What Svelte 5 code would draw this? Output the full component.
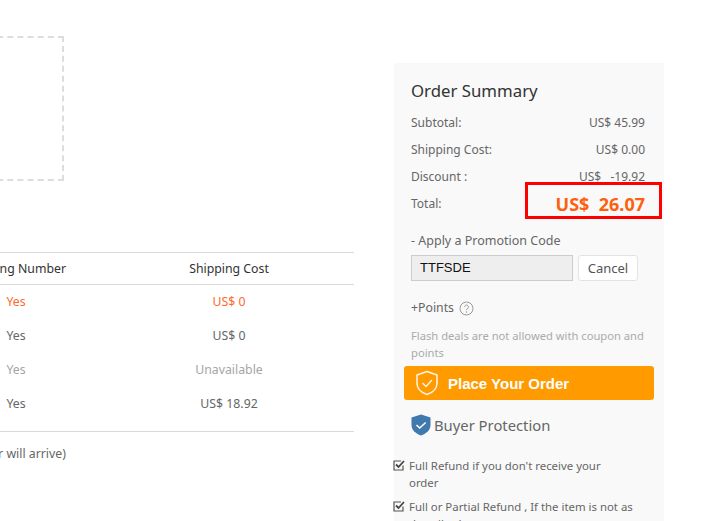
<script>
  const rows = [
    { yes: 'Yes', cost: 'US$ 0', tone: 'hot' },
    { yes: 'Yes', cost: 'US$ 0', tone: '' },
    { yes: 'Yes', cost: 'Unavailable', tone: 'off' },
    { yes: 'Yes', cost: 'US$ 18.92', tone: '' }
  ];
  const totals = [
    ['Subtotal:', 'US$ 45.99'],
    ['Shipping Cost:', 'US$ 0.00'],
    ['Discount :', 'US$   -19.92']
  ];
  const refunds = [
    "Full Refund if you don't receive your\norder",
    'Full or Partial Refund , If the item is not as described'
  ];
</script>

<div class="page">
  <section class="left">
    <div class="dash"></div>
    <div class="table">
      <div class="row head">
        <span class="c1">Tracking Number</span>
        <span class="c2">Shipping Cost</span>
      </div>
      <div class="body">
        {#each rows as r}
          <div class="row {r.tone}">
            <span class="c1">{r.yes}</span>
            <span class="c2">{r.cost}</span>
          </div>
        {/each}
      </div>
    </div>
    <p class="note">(Your order will arrive)</p>
  </section>

  <aside class="side">
    <h2>Order Summary</h2>
    {#each totals as t}
      <div class="line"><span>{t[0]}</span><span class="val">{t[1]}</span></div>
    {/each}
    <div class="line total">
      <span>Total:</span>
      <strong class="val">US$&nbsp; 26.07</strong>
      <i class="mark"></i>
    </div>

    <div class="promo-title">- Apply a Promotion Code</div>
    <div class="promo">
      <div class="code">TTFSDE</div>
      <button class="cancel">Cancel</button>
    </div>

    <div class="points">
      +Points
      <svg width="15" height="15" viewBox="0 0 15 15">
        <circle cx="7.5" cy="7.5" r="6.5" fill="none" stroke="#999" stroke-width="1" />
        <path d="M5.6 5.9a1.9 1.9 0 1 1 3 1.6c-.7.5-1.1.8-1.1 1.7" fill="none" stroke="#999" stroke-width="1" />
        <circle cx="7.5" cy="11" r=".7" fill="#999" />
      </svg>
    </div>
    <p class="flash">Flash deals are not allowed with coupon and points</p>

    <button class="order">
      <svg width="24" height="26" viewBox="0 0 24 26">
        <path d="M12 1.5 22 5v8c0 5.500-4 9.500-10 11.500C6 22.500 2 18.500 2 13V5z" fill="none" stroke="#fff" stroke-width="1.500" stroke-linejoin="round" opacity=".9" />
        <path d="M7.500 13l3.500 3.500 6-6.500" fill="none" stroke="#fff" stroke-width="1.300" opacity=".9" />
      </svg>
      <span>Place Your Order</span>
    </button>

    <div class="protect">
      <svg width="20" height="22" viewBox="0 0 20 22">
        <path d="M10 .5 19.500 3.500V11c0 5-4 8.500-9.500 10.500C4.500 19.500.5 16 .5 11V3.500z" fill="#3f79ad" />
        <path d="M5.500 11l3.200 3 6-5.500" fill="none" stroke="#fff" stroke-width="1.600" />
      </svg>
      <span>Buyer Protection</span>
    </div>

    <ul class="refunds">
      {#each refunds as text}
        <li>
          <svg width="12" height="12" viewBox="0 0 12 12">
            <path d="M10 6.500V11H1V2h7" fill="none" stroke="#555" stroke-width="1.200" />
            <path d="M3 5.500l2.500 2.500L11 2" fill="none" stroke="#444" stroke-width="1.800" />
          </svg>
          <span>{text}</span>
        </li>
      {/each}
    </ul>
  </aside>
</div>

<style>
  :global(body) {
    margin: 0;
    background: #fff;
    overflow: hidden;
  }
  .page {
    display: flex;
    height: 521px;
    overflow: hidden;
    font-family: "Noto Sans", "Open Sans", sans-serif;
    font-size: 12px;
    color: #666;
  }
  .left {
    flex: none;
    box-sizing: border-box;
    width: 438px;
    margin-left: -84px;
    margin-right: 40px;
    padding-top: 36px;
    font-size: 12.3px;
  }
  .dash {
    box-sizing: border-box;
    width: 148px;
    height: 145px;
    border: 2px dashed #ddd;
  }
  .table {
    margin-top: 71px;
    border-top: 1px solid #d9d9d9;
    border-bottom: 1px solid #d9d9d9;
  }
  .row {
    display: flex;
    height: 34px;
    align-items: center;
  }
  .head {
    height: 31px;
    color: #333;
    border-bottom: 1px solid #d9d9d9;
  }
  .body {
    margin-top: -1px;
    padding-bottom: 11px;
  }
  .c1 {
    width: 200px;
    text-align: center;
  }
  .c2 {
    flex: 1;
    text-align: center;
    margin-right: 12px;
  }
  .hot { color: #ff6a2b; }
  .off { color: #a5a5a5; }
  .note {
    margin: 13px 0 0;
    padding-left: 22px;
  }
  .side {
    flex: none;
    box-sizing: border-box;
    width: 270px;
    height: 560px;
    margin-top: 63px;
    padding: 14px 19px 0 17px;
    background: #f9f9f9;
  }
  h2 {
    margin: 0 0 4px;
    font-size: 16.8px;
    font-weight: 400;
    line-height: 28px;
    color: #333;
  }
  .line {
    display: flex;
    position: relative;
    justify-content: space-between;
    align-items: center;
    height: 27px;
    white-space: pre;
  }
  .total strong {
    font-size: 18px;
    font-weight: 700;
    color: #ff5f0f;
  }
  .mark {
    position: absolute;
    left: 114px;
    right: -17px;
    top: -8px;
    bottom: -2px;
    border: 3px solid #f00;
  }
  .promo-title {
    margin-top: 14px;
    font-size: 12.5px;
    line-height: 20px;
  }
  .promo {
    display: flex;
    gap: 5px;
    margin-top: 4px;
  }
  .code {
    box-sizing: border-box;
    width: 162px;
    height: 26px;
    padding-left: 8px;
    line-height: 24px;
    font-family: "Liberation Sans", sans-serif;
    font-size: 13px;
    color: #111;
    background: #eee;
    border: 1px solid #ccc;
  }
  .cancel {
    width: 60px;
    height: 26px;
    padding: 0;
    font: inherit;
    font-size: 13px;
    color: #555;
    background: #fff;
    border: 1px solid #e3e3e3;
    border-radius: 3px;
  }
  .points {
    display: flex;
    align-items: center;
    gap: 5px;
    margin-top: 17px;
    font-size: 12.3px;
    line-height: 20px;
  }
  .flash {
    margin: 9px -4px 0 0;
    font-size: 11.2px;
    line-height: 17px;
    color: #aaa;
  }
  .order {
    display: flex;
    align-items: center;
    gap: 9px;
    box-sizing: border-box;
    width: 250px;
    height: 34px;
    margin: 5px 0 0 -7px;
    padding: 0 0 0 11px;
    background: #ff9a00;
    border: 0;
    border-radius: 3px;
    color: #fff;
    font-family: "Liberation Sans", sans-serif;
    font-size: 15px;
    font-weight: 700;
  }
  .protect {
    display: flex;
    align-items: center;
    gap: 3px;
    margin-top: 14px;
    font-size: 14.8px;
    color: #666;
    line-height: 22px;
  }
  .refunds {
    list-style: none;
    margin: 21px 0 0 -18px;
    padding: 0;
    width: 242px;
    font-size: 11.4px;
  }
  .refunds li {
    display: flex;
    gap: 4px;
    line-height: 17px;
    margin-bottom: 7px;
    white-space: pre-line;
  }
  .refunds svg {
    flex: none;
    margin-top: 2px;
  }
</style>
